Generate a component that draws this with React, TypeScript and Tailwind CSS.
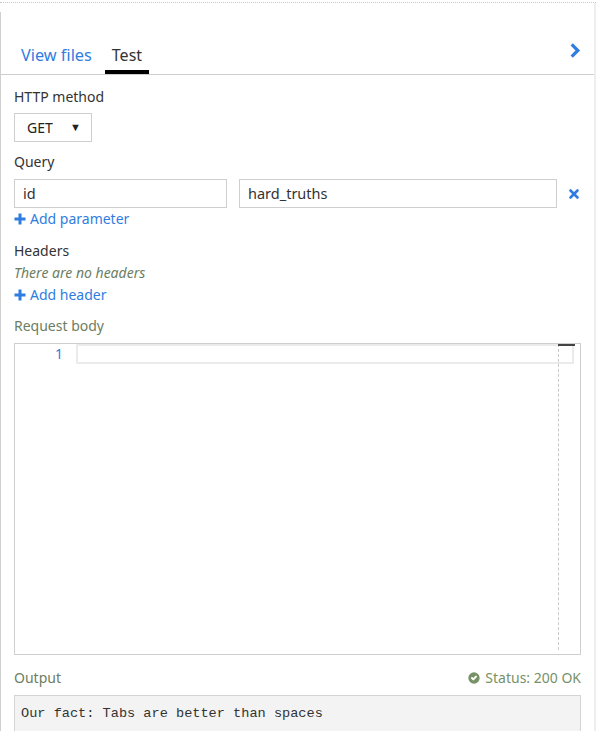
import { X, CircleCheck } from "lucide-react";

function HeavyPlus() {
  return (
    <svg viewBox="0 0 12 12" className="h-[12px] w-[12px]">
      <path d="M4.5 0.5h3v4h4v3h-4v4h-3v-4h-4v-3h4z" fill="currentColor" />
    </svg>
  );
}

export default function App() {
  const labelClass = "text-[14px] leading-[20px] text-[#333]";
  const inputClass =
    "h-[29px] border border-[#cfcfcf] bg-white px-[8px] text-[14.5px] text-[#333] flex items-center";
  const linkClass = "flex items-center gap-[4px] text-[14px] leading-[20px] text-[#2f7de1]";

  return (
    <div
      className="relative h-[731px] w-[596px] overflow-hidden bg-white"
      style={{ fontFamily: '"Noto Sans", "Open Sans", sans-serif' }}
    >
      <div className="h-[3px] border-b border-dotted border-[#c8c8c8]" />
      <div className="flex h-[728px] border-r-2 border-[#eeeeee]">
        <div className="mt-[9px] min-w-0 flex-1 border-l border-[#d0d0d0]">
          {/* Tabs */}
          <div className="flex h-[63px] items-end border-b border-[#cdcdcd] pl-[20px] pr-[13px]">
            <div className="pb-[8px] text-[16.3px] leading-[22px] text-[#2f7de1]">View files</div>
            <div className="ml-[13px] border-b-4 border-black px-[7px] pb-[4px] text-[16px] leading-[22px] text-[#333]">
              Test
            </div>
            <div className="ml-auto pb-[15px]">
              <svg viewBox="0 0 12 18" className="h-[17px] w-[12px]">
                <path d="M2.5 2.5l6.5 6.5-6.5 6.5" fill="none" stroke="#2f7de1" strokeWidth="3.4" />
              </svg>
            </div>
          </div>

          <div className="px-[13px] pt-[12px]">
            <div className={labelClass}>HTTP method</div>
            <div className="mt-[6px] flex h-[29px] w-[78px] items-center justify-between border border-[#cfcfcf] pl-[12px] pr-[10px] text-[14px] text-[#222]">
              <span>GET</span>
              <span className="text-[11px]">▼</span>
            </div>

            <div className={`${labelClass} mt-[10px]`}>Query</div>
            <div className="mt-[7px] flex items-center">
              <div className={`${inputClass} w-[213px] shrink-0`}>id</div>
              <div className={`${inputClass} ml-[12px] w-[318px] shrink-0`}>hard_truths</div>
              <X className="ml-auto h-[14px] w-[14px] shrink-0 text-[#2f7de1]" strokeWidth={4.5} />
            </div>
            <div className={`${linkClass} mt-[1px]`}>
              <HeavyPlus />
              Add parameter
            </div>

            <div className={`${labelClass} mt-[12px]`}>Headers</div>
            <div className="mt-[2px] text-[14px] italic leading-[20px] text-[#6d7d61]">
              There are no headers
            </div>
            <div className={`${linkClass} mt-[2px]`}>
              <HeavyPlus />
              Add header
            </div>

            <div className="mt-[11px] text-[14px] leading-[20px] text-[#6d7d61]">Request body</div>
            <div className="relative mt-[7px] h-[312px] w-full border border-[#cfcfcf] bg-white">
              <div className="flex h-[20px] items-stretch">
                <div className="w-[61px] pr-[13px] text-right text-[14px] leading-[20px] text-[#2f7de1]">
                  1
                </div>
                <div className="mr-[6px] flex-1 border-2 border-[#ebebeb]" />
              </div>
              {/* print margin */}
              <div className="absolute bottom-[4px] left-[543px] top-0 border-l border-dashed border-[#c8c8c8]" />
              <div className="absolute left-[543px] top-0 h-[2px] w-[17px] bg-[#444]" />
            </div>

            <div className="mt-[13px] flex items-center justify-between">
              <div className="text-[14px] leading-[20px] text-[#6d7d61]">Output</div>
              <div className="flex items-center gap-[3px] text-[14px] leading-[20px] text-[#779266]">
                <CircleCheck className="h-[16px] w-[16px] fill-[#779266] text-white" strokeWidth={3} />
                Status: 200 OK
              </div>
            </div>
            <div className="mt-[7px] h-[60px] w-full border border-[#d4d4d4] bg-[#f2f3f2] px-[6px] pt-[8px]">
              <div
                className="text-[13.6px] leading-[20px] text-[#333]"
                style={{ fontFamily: '"Liberation Mono", monospace' }}
              >
                Our fact: Tabs are better than spaces
              </div>
            </div>
          </div>
        </div>
      </div>
    </div>
  );
}
